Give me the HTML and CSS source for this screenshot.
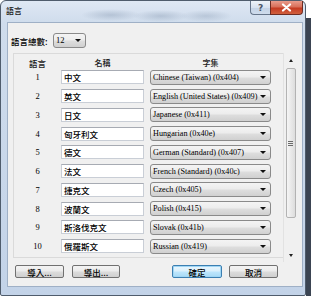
FILE: index.html
```html
<!DOCTYPE html>
<html>
<head>
<meta charset="utf-8">
<title>語言</title>
<link rel="stylesheet" href="styles.css">
</head>
<body>
<div class="desk">
  <div class="window">
    <div class="titlebar">
      <span class="title">語言</span>
      <div class="cbtns">
        <div class="cbtn help">?</div>
        <div class="cbtn close">
          <svg width="11" height="9" viewBox="0 0 11 9"><path d="M2 1.5 L9 7.5 M9 1.5 L2 7.5" stroke="#fff" stroke-width="2.2" stroke-linecap="round"/></svg>
        </div>
      </div>
    </div>
    <div class="face">
      <div class="count-row">
        <span class="label">語言總數:</span>
        <div class="combo count"><span class="ctext">12</span><i class="arrow"></i></div>
      </div>
      <div class="panel">
        <div class="list">
          <div class="head">
            <span class="c-num">語言</span>
            <span class="c-name">名稱</span>
            <span class="c-set">字集</span>
          </div>
          <div class="row"><span class="c-num">1</span><div class="c-name field">中文</div><div class="c-set combo"><span class="ctext">Chinese (Taiwan) (0x404)</span><i class="arrow"></i></div></div>
          <div class="row"><span class="c-num">2</span><div class="c-name field">英文</div><div class="c-set combo"><span class="ctext">English (United States) (0x409)</span><i class="arrow"></i></div></div>
          <div class="row"><span class="c-num">3</span><div class="c-name field">日文</div><div class="c-set combo"><span class="ctext">Japanese (0x411)</span><i class="arrow"></i></div></div>
          <div class="row"><span class="c-num">4</span><div class="c-name field">匈牙利文</div><div class="c-set combo"><span class="ctext">Hungarian (0x40e)</span><i class="arrow"></i></div></div>
          <div class="row"><span class="c-num">5</span><div class="c-name field">德文</div><div class="c-set combo"><span class="ctext">German (Standard) (0x407)</span><i class="arrow"></i></div></div>
          <div class="row"><span class="c-num">6</span><div class="c-name field">法文</div><div class="c-set combo"><span class="ctext">French (Standard) (0x40c)</span><i class="arrow"></i></div></div>
          <div class="row"><span class="c-num">7</span><div class="c-name field">捷克文</div><div class="c-set combo"><span class="ctext">Czech (0x405)</span><i class="arrow"></i></div></div>
          <div class="row"><span class="c-num">8</span><div class="c-name field">波蘭文</div><div class="c-set combo"><span class="ctext">Polish (0x415)</span><i class="arrow"></i></div></div>
          <div class="row"><span class="c-num">9</span><div class="c-name field">斯洛伐克文</div><div class="c-set combo"><span class="ctext">Slovak (0x41b)</span><i class="arrow"></i></div></div>
          <div class="row"><span class="c-num">10</span><div class="c-name field">俄羅斯文</div><div class="c-set combo"><span class="ctext">Russian (0x419)</span><i class="arrow"></i></div></div>
        </div>
        <div class="scrollbar">
          <div class="sb-btn"><i class="up"></i></div>
          <div class="thumb"><span class="grip"></span><span class="grip"></span><span class="grip"></span></div>
          <div class="track"></div>
          <div class="sb-btn"><i class="down"></i></div>
        </div>
      </div>
      <div class="buttons">
        <div class="group left">
          <div class="btn w49">導入...</div>
          <div class="btn w48">導出...</div>
        </div>
        <div class="group right">
          <div class="btn w50 default">確定</div>
          <div class="btn w49">取消</div>
        </div>
      </div>
    </div>
  </div>
  <div class="edge"></div>
</div>
</body>
</html>
```
FILE: styles.css
```css
* { box-sizing: border-box; }
html, body { margin: 0; padding: 0; }
body {
  width: 311px;
  height: 298px;
  overflow: hidden;
  background: #ffffff;
  font-family: "Liberation Serif", "Noto Sans CJK TC", serif;
  font-size: 8.5px;
  color: #000;
}
.desk { display: flex; align-items: flex-start; }
.window {
  width: 306px;
  height: 296px;
  border: 1px solid #4f5c6c;
  border-radius: 6px 6px 2px 2px;
  background:
    radial-gradient(ellipse 30px 6px at 110px 14px, rgba(120,140,165,0.35), transparent),
    radial-gradient(ellipse 28px 6px at 160px 15px, rgba(120,140,165,0.35), transparent),
    radial-gradient(ellipse 26px 6px at 205px 15px, rgba(120,140,165,0.3), transparent),
    linear-gradient(180deg, #dfe8f4 0px, #cfdcec 22px, #c3d3e8 100%);
  display: flex;
  flex-direction: column;
}
.edge {
  width: 5px;
  height: 278px;
  margin-top: 18px;
  background: #3b4452;
}
.titlebar {
  height: 21px;
  display: flex;
  align-items: flex-start;
}
.title {
  padding: 5px 0 0 5px;
  font-family: "Noto Sans CJK TC", sans-serif;
  font-weight: 500;
  font-size: 8px;
  line-height: 10px;
  color: #1b1b1b;
}
.cbtns {
  margin-left: auto;
  margin-right: 2px;
  display: flex;
}
.cbtn {
  height: 14px;
  display: flex;
  align-items: center;
  justify-content: center;
  border: 1px solid #66758a;
  border-top: none;
}
.help {
  width: 20px;
  border-radius: 0 0 0 4px;
  border-right: none;
  background: linear-gradient(180deg, #eef3f9 0%, #d8e2ef 50%, #c3d2e5 51%, #cfdcec 100%);
  font-family: "DejaVu Sans", sans-serif;
  font-weight: bold;
  font-size: 9px;
  color: #4a5566;
}
.close {
  width: 33px;
  border-radius: 0 0 4px 0;
  border-color: #6e2c22;
  background: linear-gradient(180deg, #e99c8c 0%, #d8705a 45%, #c53a22 55%, #d0603e 100%);
}
.face {
  margin: 0 2px 0 6px;
  height: 265px;
  border: 1px solid #9fb0c6;
  background: #f0f0f0;
  display: flex;
  flex-direction: column;
}
.count-row {
  margin-top: 10px;
  height: 15px;
  padding-left: 3px;
  display: flex;
  align-items: center;
}
.label {
  width: 42px;
  font-family: "Noto Sans CJK TC", sans-serif;
  font-weight: 500;
  font-size: 8.5px;
  line-height: 10px;
}
.combo {
  height: 15px;
  border: 1px solid #8a8a8a;
  border-radius: 3px;
  background: linear-gradient(180deg, #f4f4f4 0%, #ececec 48%, #dedede 52%, #d0d0d0 100%);
  display: flex;
  align-items: center;
  font-size: 8.2px;
}
.combo.count { width: 33px; font-size: 8.5px; }
.ctext {
  flex: 1;
  padding-left: 2px;
  white-space: nowrap;
  overflow: hidden;
  line-height: 11px;
}
.arrow {
  width: 0;
  height: 0;
  margin-right: 4px;
  border-left: 3px solid transparent;
  border-right: 3px solid transparent;
  border-top: 3px solid #111;
}
.panel {
  margin-top: 5px;
  margin-left: 5px;
  height: 209px;
  display: flex;
  align-items: flex-start;
}
.list {
  width: 270px;
  height: 205px;
  border: 1px solid #dadada;
  border-right: none;
  display: flex;
  flex-direction: column;
}
.head {
  height: 14px;
  padding-top: 3px;
  display: flex;
  align-items: center;
  font-family: "Noto Sans CJK TC", sans-serif;
  font-weight: 500;
  font-size: 8px;
  color: #1a1a1a;
}
.head .c-name, .head .c-set { text-align: center; }
.row {
  height: 18.75px;
  display: flex;
  align-items: center;
}
.c-num {
  width: 47px;
  text-align: center;
  font-size: 8.5px;
}
.c-name { width: 83px; }
.c-set { width: 121px; margin-left: 6px; }
.field {
  height: 14px;
  background: #fff;
  border: 1px solid #c9ced6;
  border-top-color: #a7abb3;
  padding-left: 2px;
  font-family: "Noto Sans CJK TC", sans-serif;
  font-weight: 500;
  font-size: 8.5px;
  line-height: 12px;
  white-space: nowrap;
}
.scrollbar {
  width: 14px;
  height: 209px;
  border-left: 1px solid #e2e2e2;
  display: flex;
  flex-direction: column;
  align-items: center;
}
.sb-btn {
  height: 15px;
  width: 100%;
  display: flex;
  align-items: center;
  justify-content: center;
}
.sb-btn:last-child { height: 14px; }
.up, .down {
  width: 0;
  height: 0;
  border-left: 2.5px solid transparent;
  border-right: 2.5px solid transparent;
}
.up { border-bottom: 3px solid #222; }
.down { border-top: 3px solid #222; }
.thumb {
  width: 10px;
  height: 150px;
  border: 1px solid #b3b3b3;
  border-radius: 2px;
  background: linear-gradient(90deg, #f5f5f5 0%, #e9e9e9 50%, #dddddd 100%);
  display: flex;
  flex-direction: column;
  align-items: center;
  justify-content: center;
  gap: 1px;
}
.grip {
  width: 5px;
  height: 1px;
  background: #6b6b6b;
}
.track { flex: 1; }
.buttons {
  margin-top: 3px;
  padding-left: 7px;
  height: 13px;
  display: flex;
}
.group { display: flex; }
.group.left { gap: 8px; }
.group.right { gap: 7px; margin-left: 52px; }
.btn {
  height: 13px;
  border: 1px solid #707070;
  border-radius: 2px;
  background: linear-gradient(180deg, #f3f3f3 0%, #ebebeb 48%, #dcdcdc 52%, #cfcfcf 100%);
  display: flex;
  align-items: center;
  justify-content: center;
  font-family: "Noto Sans CJK TC", sans-serif;
  font-weight: 500;
  font-size: 8.5px;
  line-height: 10px;
  white-space: nowrap;
}
.btn.default {
  border-color: #3c7fb1;
  background: linear-gradient(180deg, #eaf6fd 0%, #d9f0fc 48%, #bee6fd 52%, #a7d9f5 100%);
  box-shadow: inset 0 0 0 1px #9fd6f5;
}
.w48 { width: 48px; }
.w49 { width: 49px; }
.w50 { width: 50px; }
```
